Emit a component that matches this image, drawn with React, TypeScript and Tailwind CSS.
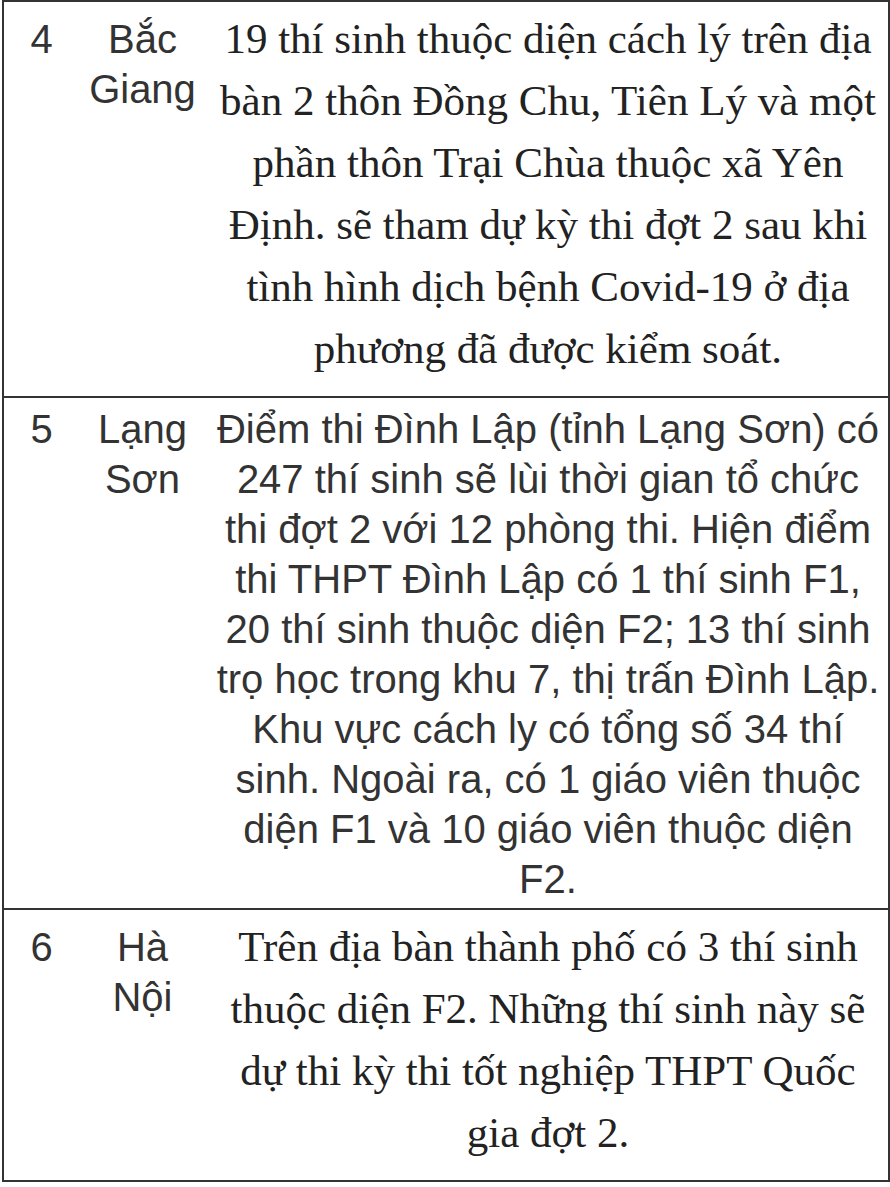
const rows = [
  {
    no: '4',
    place: ['Bắc', 'Giang'],
    serif: true,
    text: '19 thí sinh thuộc diện cách lý trên địa bàn 2 thôn Đồng Chu, Tiên Lý và một phần thôn Trại Chùa thuộc xã Yên Định. sẽ tham dự kỳ thi đợt 2 sau khi tình hình dịch bệnh Covid-19 ở địa phương đã được kiểm soát.',
  },
  {
    no: '5',
    place: ['Lạng', 'Sơn'],
    serif: false,
    text: 'Điểm thi Đình Lập (tỉnh Lạng Sơn) có 247 thí sinh sẽ lùi thời gian tổ chức thi đợt 2 với 12 phòng thi. Hiện điểm thi THPT Đình Lập có 1 thí sinh F1, 20 thí sinh thuộc diện F2; 13 thí sinh trọ học trong khu 7, thị trấn Đình Lập. Khu vực cách ly có tổng số 34 thí sinh. Ngoài ra, có 1 giáo viên thuộc diện F1 và 10 giáo viên thuộc diện F2.',
  },
  {
    no: '6',
    place: ['Hà', 'Nội'],
    serif: true,
    text: 'Trên địa bàn thành phố có 3 thí sinh thuộc diện F2. Những thí sinh này sẽ dự thi kỳ thi tốt nghiệp THPT Quốc gia đợt 2.',
  },
]

export default function App() {
  return (
    <div className="bg-white w-[890px] min-h-[1187px] pl-[2px]">
      <table
        className="w-[888px] border-collapse border-2 border-[#333] text-[#333] table-fixed"
        style={{ fontFamily: '"Liberation Sans", Arial, sans-serif' }}
      >
        <colgroup>
          <col className="w-[76px]" />
          <col className="w-[127px]" />
          <col />
        </colgroup>
        <tbody>
          {rows.map((r) => (
            <tr key={r.no} className="border-b-2 border-[#333]">
              <td className="align-baseline text-center pt-[6px] pb-[4px] px-[4px] text-[40px] leading-[50px]">
                {r.no}
              </td>
              <td className="align-baseline text-center pt-[6px] pb-[4px] px-[4px] text-[40px] leading-[50px]">
                {r.place[0]}
                <br />
                {r.place[1]}
              </td>
              <td className="align-baseline text-center pt-[6px] pb-[4px] pl-[8px] pr-[6px]">
                {r.serif ? (
                  <p
                    className="text-[43px] leading-[62px] text-[#222] mb-[12px]"
                    style={{ fontFamily: '"Liberation Serif", "Times New Roman", serif' }}
                  >
                    {r.text}
                  </p>
                ) : (
                  <p className="text-[40px] leading-[50px]">{r.text}</p>
                )}
              </td>
            </tr>
          ))}
        </tbody>
      </table>
    </div>
  )
}
